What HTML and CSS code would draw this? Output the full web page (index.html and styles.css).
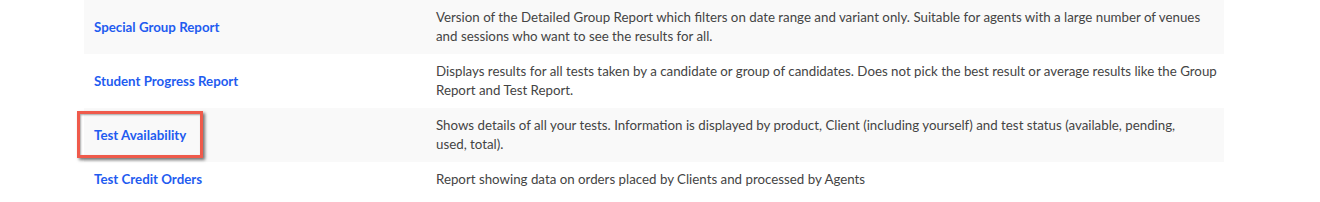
FILE: index.html
```html
<!DOCTYPE html>
<html lang="en">
<head>
	<meta charset="UTF-8">
	<title>Reports</title>
	<link rel="stylesheet" href="styles.css">
</head>
<body>

<div class="wrap">
	<table class="reports">
		<colgroup><col class="c1"><col class="c2"></colgroup>
		<tr>
			<td class="name"><a href="#">Special Group Report</a></td>
			<td class="desc">Version of the Detailed Group Report which filters on date range and variant only. Suitable for agents with a large number of venues and sessions who want to see the results for all.</td>
		</tr>
		<tr>
			<td class="name"><a href="#">Student Progress Report</a></td>
			<td class="desc">Displays results for all tests taken by a candidate or group of candidates. Does not pick the best result or average results like the Group Report and Test Report.</td>
		</tr>
		<tr>
			<td class="name"><a href="#" class="mark">Test Availability</a></td>
			<td class="desc">Shows details of all your tests. Information is displayed by product, Client (including yourself) and test status (available, pending,<br>used, total).</td>
		</tr>
		<tr>
			<td class="name"><a href="#">Test Credit Orders</a></td>
			<td class="desc">Report showing data on orders placed by Clients and processed by Agents</td>
		</tr>
	</table>
</div>

</body>
</html>
```

FILE: styles.css
```css
*{padding:0; margin:0;}
body{background:#fff; font-family:"Lato","Noto Sans",sans-serif; font-size:13.3px; color:#444;}
.wrap{padding-left:84px; width:1140px;}
.reports{width:1140px; border-collapse:collapse; table-layout:fixed;}
.c1{width:342px;}
.reports tr:nth-child(odd){background:#f9f9f9;}
.reports td{padding:8px 10px; line-height:19px; vertical-align:middle;}
.reports tr:first-child td{height:38px;}
.name a{color:#1f5cf0; font-weight:bold; text-decoration:none; position:relative;}
.mark:after{content:""; position:absolute; left:-17px; top:-16px; right:-17px; bottom:-15px; border:3px solid #ef5a4b; box-shadow:2px 2px 3px rgba(0,0,0,.55), inset 1px 1px 2px rgba(0,0,0,.35);}
.reports td.desc{color:#444; padding-right:5px;}
```
